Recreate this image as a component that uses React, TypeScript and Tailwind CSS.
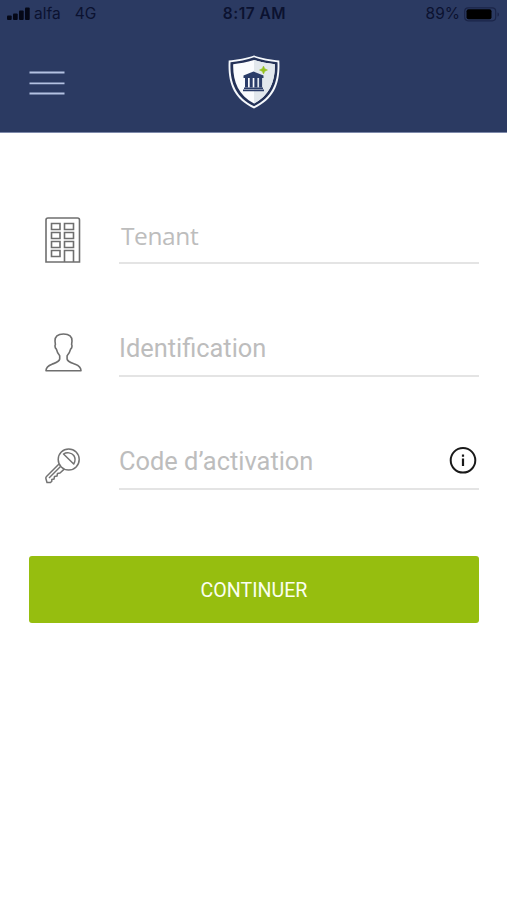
import type { ReactNode } from "react";
import clsx from "clsx";

const StatusBar = () => (
  <div className="grid h-7 grid-cols-3 items-center pl-[7px] pr-[7px] font-['Inter',sans-serif] text-[#0b1230]">
    <div className="flex items-center">
      <svg className="mr-1 h-[14px] w-[23px]" fill="#050817" viewBox="0 0 23 14">
        <rect height="4.5" rx="1" width="4.7" x="0" y="8.5" />
        <rect height="6.5" rx="1" width="4.7" x="6" y="6.5" />
        <rect height="9.5" rx="1" width="4.7" x="12" y="3.5" />
        <rect height="12.5" rx="1" width="4.7" x="18" y="0.5" />
      </svg>
      <span className="text-[15.5px]">alfa</span>
      <span className="ml-3.5 text-[15.5px]">4G</span>
    </div>
    <span className="pl-0.5 text-center text-[15.5px] font-semibold tracking-[0.5px]">8:17 AM</span>
    <div className="flex items-center justify-end">
      <span className="mr-1 text-[15.5px]">89%</span>
      <svg className="h-[15px] w-[36px]" viewBox="0 0 36 15">
        <rect fill="none" height="13" rx="3.5" stroke="#1b2548" strokeWidth="1.2" width="31" x="0.7" y="0.8" />
        <rect fill="#000" height="10" rx="2" width="25" x="2.5" y="2.3" />
        <path d="M33.5 5.5c2 .6 2 3.400 0 4z" fill="#1b2548" />
      </svg>
    </div>
  </div>
);

const MenuIcon = () => (
  <svg className="h-6 w-9" stroke="#b4c1e2" strokeWidth="1.8" viewBox="0 0 36 24">
    <path d="M.5 1.500h35M.5 12.300h35M.5 22.500h35" />
  </svg>
);

const ShieldLogo = () => (
  <svg className="h-[54px] w-[52px]" viewBox="0 0 52 54">
    <path d="M26 .5C33 3 43 5 51.300 5.500C52.500 27 47 44 26 53.500C5 44-.5 27 .7 5.500C9 5 19 3 26 .5Z" fill="#f5f8fc" />
    <path d="M26 2.300C33 4.700 42 6.600 49.500 7.200C50.300 26 45 42 26 51.300C7 42 1.700 26 2.500 7.200C10 6.600 19 4.700 26 2.300Z" fill="#243258" />
    <path d="M26 5C33 7.200 41 8.600 46.800 9.200C47.300 26 42 40 26 48.500C10 40 4.700 26 5.200 9.200C11 8.600 19 7.200 26 5Z" fill="#fafcfe" />
    <path d="M26 5C33 7.200 41 8.600 46.800 9.200C47.300 26 42 40 26 48.500Z" fill="#e2e8ed" />
    <g fill="#2b3d69">
      <path d="M25.500 16.500L35.500 20.500V23H15.500V20.500Z" />
      <path d="M17 23h3v9.500h-3zM21.700 23h3v9.500h-3zM26.400 23h3v9.500h-3zM31.100 23h3v9.500h-3z" />
      <path d="M16 32.500h19v1.500h-19zM15 34.500h21v1.700h-21z" />
    </g>
    <path d="M35.500 11L36.800 13.700L39.500 15L36.800 16.300L35.500 19L34.200 16.300L31.500 15L34.200 13.700Z" fill="#95c11f" stroke="#95c11f" strokeWidth=".5" />
  </svg>
);

const BuildingIcon = () => (
  <svg className="h-[46px] w-9" fill="none" stroke="#6f6f6f" strokeWidth="1.600" viewBox="0 0 36 46">
    <path d="M1 45V3q0-2 2-2h29.500q2 0 2 2v42z" />
    <path d="M6.500 6.500h8.500v6H6.500zM19.500 6.500h9v6h-9zM6.500 15.500h8.500v6H6.500zM19.500 15.500h9v6h-9zM6.500 24.500h8.500v6H6.500zM19.500 24.500h9v6h-9zM6.500 33.500h8.500v6H6.500zM19.500 45V33.500h9V45" />
  </svg>
);

const PersonIcon = () => (
  <svg className="mb-0.5 h-10 w-[38px]" fill="none" stroke="#6f6f6f" strokeLinejoin="round" strokeWidth="1.600" viewBox="0 0 38 40">
    <path d="M18.500 2C12.500 2 9.800 4.500 10 9L10.400 12.500C9.600 13.500 10 16 11.400 17.200C12 20 13 22 14.700 23.700V27C14.200 30 11 30.700 7 32.200C3 33.700 1 35.500 1 38.700H36C36 35.500 34.200 33.700 30.200 32.200C26.200 30.700 22.600 30 22.100 27V23.700C23.800 22 25 20 25.600 17.200C27 16 27.400 13.500 26.600 12.500L27 9C27.200 4.500 24.500 2 18.500 2Z" />
  </svg>
);

const KeyIcon = () => (
  <svg className="h-9 w-9" fill="none" stroke="#737373" strokeLinejoin="round" strokeWidth="1.500" viewBox="0 0 36 36">
    <circle cx="23.700" cy="11.500" r="10.500" />
    <path d="M18.500 6C21.500 4 26.500 4.500 28.800 7.500C30.500 10 30.500 13 28.700 16Z" />
    <path d="M14 16L1.500 28.500Q.5 29.500 1 31L2 34.500H5.500L6.800 33.200L6.800 31.500L9 31L9.500 28.500L12 28L12.500 25.500L15 25L19.200 21.100" />
    <path d="M15.500 18.500L4 30" />
  </svg>
);

const InfoIcon = () => (
  <svg className="h-7 w-7" fill="none" stroke="#191919" strokeWidth="2" viewBox="0 0 28 28">
    <circle cx="14" cy="13.300" r="12.300" />
    <path d="M14 11.600V19.100M14 7.500v2.200" strokeWidth="2.200" />
  </svg>
);

type FieldProps = {
  icon: ReactNode;
  label: string;
  labelClassName?: string;
  trailing?: ReactNode;
};

const Field = ({ icon, label, labelClassName, trailing }: FieldProps) => (
  <div className="flex h-[113px] items-end">
    <div className="flex h-12 w-[90px] shrink-0 items-center pl-4">{icon}</div>
    <div className="flex h-14 flex-1 items-center justify-between border-b-2 border-[#e4e4e4] pr-0.5">
      <span className={clsx("text-[#bdbdbd]", labelClassName)}>{label}</span>
      {trailing}
    </div>
  </div>
);

export default function App() {
  return (
    <div className="flex min-h-[900px] w-full flex-col bg-white font-['Roboto',sans-serif]">
      <header className="h-[133px] border-b border-[#7d89aa] bg-[#2b3a62]">
        <StatusBar />
        <div className="grid h-[110px] grid-cols-3 items-center pl-[29px] pr-7">
          <button aria-label="Menu" className="w-9">
            <MenuIcon />
          </button>
          <div className="flex justify-center pb-0.5">
            <ShieldLogo />
          </div>
        </div>
      </header>

      <main className="flex flex-col pl-[29px] pr-7 pt-[18px]">
        <Field icon={<BuildingIcon />} label="Tenant" labelClassName="font-['Open_Sans',sans-serif] text-[24.5px] tracking-[-0.4px] pl-0.5 pt-0.5" />
        <Field icon={<PersonIcon />} label="Identification" labelClassName="text-[25.4px]" />
        <Field icon={<KeyIcon />} label="Code d’activation" labelClassName="text-[25.4px]" trailing={<InfoIcon />} />
        <button className="mt-[66px] h-[67px] rounded-[3px] bg-[#96be0f] pt-0.5 text-[19.6px] text-[#fbfff0]">CONTINUER</button>
      </main>
    </div>
  );
}
